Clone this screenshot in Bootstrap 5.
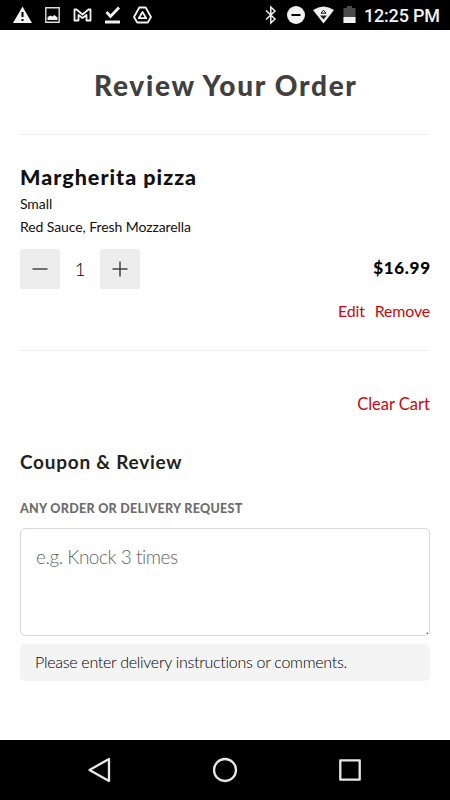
<!DOCTYPE html>
<html lang="en">
<head>
<meta charset="utf-8">
<meta name="viewport" content="width=device-width, initial-scale=1">
<title>Review Your Order</title>
<link href="https://cdn.jsdelivr.net/npm/bootstrap@5.3.0/dist/css/bootstrap.min.css" rel="stylesheet">
<style>
body{font-family:Lato,"Open Sans",sans-serif;font-variant-ligatures:none;color:#111;height:800px;overflow:hidden}
.status-bar{height:30px;font-family:Roboto,sans-serif}
.status-bar svg,.system-nav svg{display:block}
.clock{font-size:18px;line-height:31px;font-weight:500;letter-spacing:-.2px;color:#f2f2f2}
.order-page{padding:38px 20px 0}
.page-title{font-size:28px;line-height:35px;font-weight:900;letter-spacing:1.7px;margin:0 -1.7px 31px 0;color:#404041}
.item-block{border-top:1px solid #eee;border-bottom:1px solid #eee;padding:27px 0 26px}
.item-name{font-size:21.5px;line-height:30px;font-weight:900;letter-spacing:1px;margin-bottom:1px}
.item-detail{font-size:14px;line-height:22.5px;letter-spacing:-.08px}
.qty-row{margin-top:11px;height:40px}
.qty-btn{width:40px;height:40px;background:#ededed;border-radius:2px}
.qty-value{width:40px;font-size:18.5px;line-height:38px;font-weight:300;color:#000}
.price{font-size:17px;line-height:24px;font-weight:900;letter-spacing:.7px;margin:-2px -.7px 0 0;color:#000}
.item-actions{margin-top:9px;gap:10px}
.item-actions .action{margin-bottom:1px}
.action{font-size:16px;line-height:25px;color:#c8080e;letter-spacing:-.2px}
.clear-row{margin-top:40px;height:24px}
.clear-row .action{font-size:16.5px;line-height:26px;letter-spacing:0}
.section-title{font-size:19px;line-height:26px;font-weight:700;letter-spacing:.75px;color:#222;margin:34px 0 23px}
.field-label{font-size:12.5px;line-height:21px;font-weight:900;letter-spacing:.3px;color:#6c6c6c;margin-bottom:9px}
.request-box{height:107.5px;padding:13px 15px;border:1px solid #d8d8d8;border-radius:5px;font-size:19px;line-height:30px;letter-spacing:-.47px;resize:none;background:linear-gradient(135deg,transparent 50%,#999 50%) right 1px bottom 1px/3px 3px no-repeat #fff}
.request-box::placeholder{color:#666;font-weight:300}
.hint{margin-top:8.5px;height:36.5px;line-height:36px;padding-left:15px;border-radius:5px;background:#f4f4f4;font-size:16px;font-weight:300;letter-spacing:-.28px;color:#000}
.system-nav{height:60px}
</style>
</head>
<body class="d-flex flex-column bg-white">
<header class="status-bar bg-black flex-shrink-0 d-flex">
<svg width="360" height="30" viewBox="0 0 360 30" fill="#f2f2f2">
<path d="M22.500 6.500 32 23H13Z"/><path d="M21.500 12h2v5h-2zM21.500 19h2v2h-2z" fill="#000"/>
<path d="M45.800 7.800h13.400v14.400h-13.400z" fill="none" stroke="#ddd" stroke-width="1.400"/><path d="M47.500 20v-3l3-1.500 2 1 2-1.500 3 2.500V20z"/>
<path d="M74.500 20.500V9.500h2l6 5 6-5h2v11h-4v-5.500l-4 3-4-3v5.500z" fill="none" stroke="#f2f2f2" stroke-width="1.800" stroke-linejoin="round"/>
<path d="M106.500 12l4 4.500 8.500-9" fill="none" stroke="#f2f2f2" stroke-width="2.800"/><path d="M105 20.500h15v3h-15z"/>
<path d="M139.300 7.500h6.400l5.300 9.500-3.200 5.500h-10.600L134 17z" fill="none" stroke="#f2f2f2" stroke-width="1.800" stroke-linejoin="round"/><path d="M142.500 12l3.700 6.200h-7.400z" fill="none" stroke="#f2f2f2" stroke-width="1.800" stroke-linejoin="round"/>
<path d="M266 10.500l9 8.500-4.200 4V7l4.200 4-9 8.500" fill="none" stroke="#f2f2f2" stroke-width="1.500"/>
<circle cx="296" cy="15" r="9"/><path d="M291.500 14h9v2h-9z" fill="#000"/>
<path d="M313 10q10.500-7 21 0L323.500 23.500z"/><path d="M323.500 10.200l2.500 3h-5z" fill="none" stroke="#111"/><path d="M320 15.500h7l-3.500 4z" fill="#222"/>
<path d="M347 6h5v2h3.500v15h-12V8h3.500z" fill="#4a4a4a"/><path d="M343.500 17h12v6h-12z"/>
</svg>
<div class="clock text-nowrap ps-1">12:25 PM</div>
</header>
<main class="order-page flex-grow-1">
<h1 class="page-title text-center text-nowrap">Review Your Order</h1>
<section class="item-block">
<h2 class="item-name">Margherita pizza</h2>
<div class="item-detail">Small</div>
<div class="item-detail">Red Sauce, Fresh Mozzarella</div>
<div class="qty-row d-flex align-items-center">
<button class="qty-btn btn border-0 p-0 d-flex align-items-center justify-content-center" aria-label="Decrease"><svg width="16" height="16"><path d="M.5 8h15" stroke="#444" stroke-width="1.500"/></svg></button>
<span class="qty-value text-center">1</span>
<button class="qty-btn btn border-0 p-0 d-flex align-items-center justify-content-center" aria-label="Increase"><svg width="16" height="16"><path d="M.5 8h15M8 .5v15" stroke="#444" stroke-width="1.500"/></svg></button>
<span class="price ms-auto">$16.99</span>
</div>
<div class="item-actions d-flex justify-content-end"><a class="action text-decoration-none" href="#">Edit</a><a class="action text-decoration-none" href="#">Remove</a></div>
</section>
<div class="clear-row d-flex justify-content-end"><a class="action text-decoration-none" href="#">Clear Cart</a></div>
<h2 class="section-title">Coupon &amp; Review</h2>
<label class="field-label d-block text-uppercase" for="request">Any order or delivery request</label>
<textarea id="request" class="request-box form-control d-block" placeholder="e.g. Knock 3 times"></textarea>
<div class="hint">Please enter delivery instructions or comments.</div>
</main>
<nav class="system-nav bg-black flex-shrink-0">
<svg width="450" height="60" fill="none" stroke="#e8e8e8" stroke-width="2.300" stroke-linejoin="round"><path d="M89.500 30l19.500-11v22z"/><circle cx="225" cy="30" r="11"/><path d="M340.300 20.300h19.400v19.400h-19.400z"/></svg>
</nav>
<script src="https://cdn.jsdelivr.net/npm/bootstrap@5.3.0/dist/js/bootstrap.bundle.min.js"></script>
</body>
</html>
